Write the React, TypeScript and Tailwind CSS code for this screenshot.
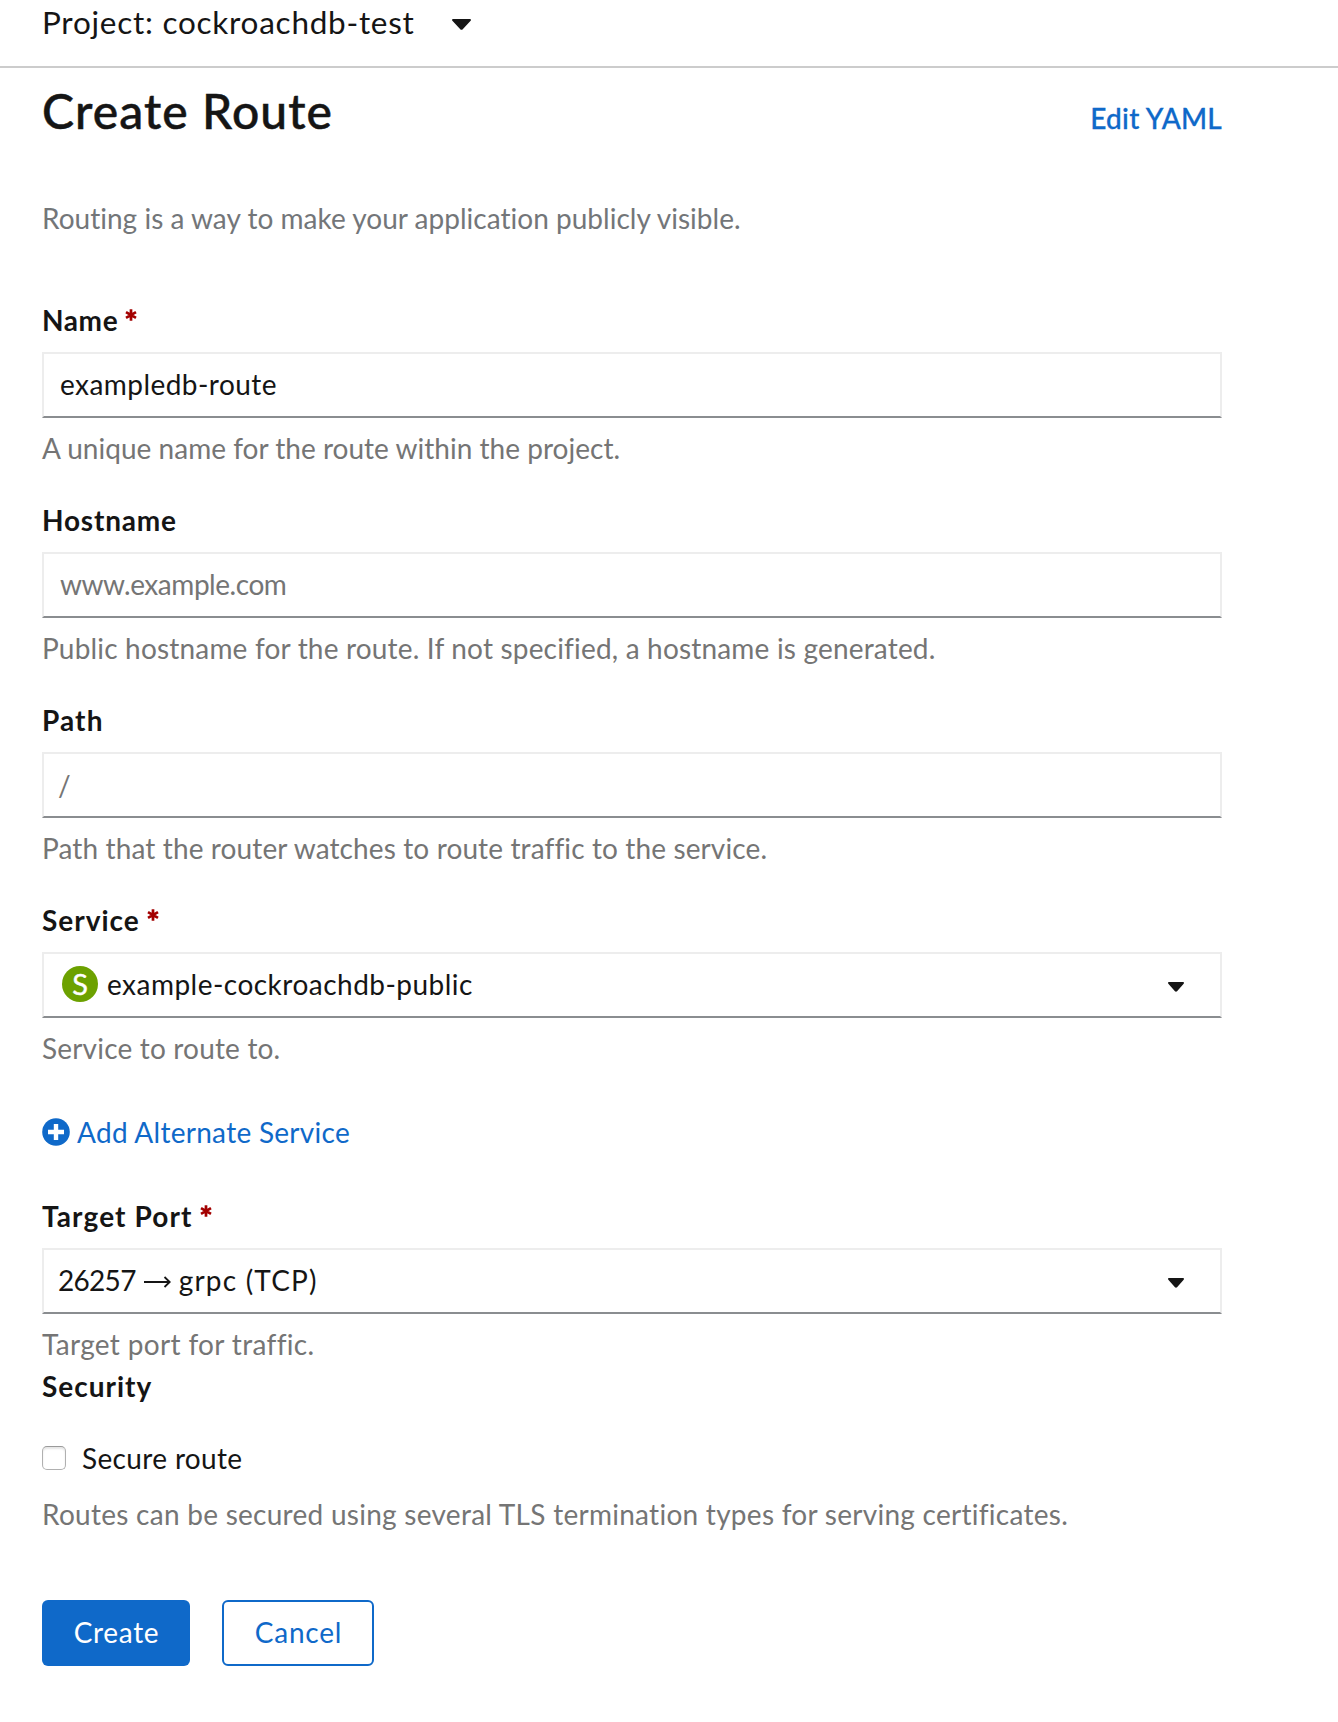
import type { ReactNode } from 'react';

function Caret({ className }: { className: string }) {
  return (
    <svg viewBox="0 0 20 11" preserveAspectRatio="none" className={className} fill="currentColor" aria-hidden="true">
      <path d="M1.2 0h17.6c1 0 1.5 1.1.8 1.8l-8.3 8.5c-.7.7-1.9.7-2.6 0L.4 1.8C-.3 1.1.2 0 1.2 0z" />
    </svg>
  );
}

function Label({ children, tracking, required }: { children: ReactNode; tracking: string; required?: boolean }) {
  return (
    <div className="flex h-[42px] items-start text-[28px] leading-[44px] font-bold">
      <span className={tracking}>{children}</span>
      {required && (
        <svg viewBox="0 0 12 12" className="mt-[11px] ml-[7px] h-[12px] w-[12px] text-[#a30000]" aria-label="required">
          <path d="M6 .3v11.4M1 3.1l10 5.8M11 3.1L1 8.9" stroke="currentColor" strokeWidth="2.7" fill="none" />
        </svg>
      )}
    </div>
  );
}

const box =
  'mt-3 flex h-[66px] w-full items-center border-2 border-t-[#ededed] border-r-[#ededed] border-b-[#8a8d90] border-l-[#ededed] bg-white pb-[2px] text-[28px]';

function Helper({ children, tracking }: { children: ReactNode; tracking: string }) {
  return (
    <p className="mt-2 h-[42px] text-[28px] leading-[44px] whitespace-nowrap text-[#757575]">
      <span className={tracking}>{children}</span>
    </p>
  );
}

export default function App() {
  return (
    <div className="min-h-[1722px] w-full overflow-hidden bg-white font-['Lato','Liberation_Sans',sans-serif] text-[#151515] [font-variant-ligatures:none]">
      <header className="flex h-[68px] items-start border-b-2 border-[#cccccc] pl-[42px]">
        <button className="flex h-[46px] items-center text-[31.5px] leading-[46px] whitespace-nowrap">
          <span className="mb-[2px] w-[373px] text-left tracking-[0.74px]">Project: cockroachdb-test</span>
          <Caret className="mt-[3px] ml-[37px] h-[11px] w-[19px]" />
        </button>
      </header>

      <main className="w-[1222px] pl-[42px]">
        <div className="flex h-[106px] items-start justify-between pt-[11px]">
          <h1 className="text-[48px] leading-[64px] font-medium tracking-[1.1px] whitespace-nowrap [-webkit-text-stroke:0.5px_currentColor]">
            Create Route
          </h1>
          <a className="mt-[17px] text-[28px] leading-[44px] font-medium tracking-[0.25px] whitespace-nowrap text-[#0f69c9] [-webkit-text-stroke:0.3px_currentColor]">
            Edit YAML
          </a>
        </div>

        <p className="mt-[22px] h-[42px] text-[28px] leading-[44px] tracking-[0.02px] whitespace-nowrap text-[#737679]">
          Routing is a way to make your application publicly visible.
        </p>

        <form className="mt-[60px]" onSubmit={(e) => e.preventDefault()}>
          <section>
            <Label tracking="tracking-[0.6px]" required>Name</Label>
            <input className={`${box} pl-4 tracking-[0.45px] outline-none`} defaultValue="exampledb-route" />
            <Helper tracking="tracking-[0.02px]">A unique name for the route within the project.</Helper>
          </section>

          <section className="mt-[30px]">
            <Label tracking="tracking-[0.8px]">Hostname</Label>
            <input
              className={`${box} pl-4 tracking-[-0.45px] outline-none placeholder:text-[#757575]`}
              placeholder="www.example.com"
            />
            <Helper tracking="tracking-[0.18px]">
              Public hostname for the route. If not specified, a hostname is generated.
            </Helper>
          </section>

          <section className="mt-[30px]">
            <Label tracking="tracking-[1.1px]">Path</Label>
            <input className={`${box} pt-[2px] pb-0 pl-[14px] outline-none placeholder:text-[#757575]`} placeholder="/" />
            <Helper tracking="tracking-[0.12px]">Path that the router watches to route traffic to the service.</Helper>
          </section>

          <section className="mt-[30px]">
            <Label tracking="tracking-[1px]" required>Service</Label>
            <button className={`${box} justify-between pr-[36px] pl-[18px]`}>
              <span className="flex items-center gap-[9px]">
                <span className="flex h-9 w-9 items-center justify-center rounded-full bg-[#6ca100] pb-[2px] text-[29px] leading-none text-white [-webkit-text-stroke:0.4px_currentColor]">
                  S
                </span>
                <span className="tracking-[0.48px]">example-cockroachdb-public</span>
              </span>
              <Caret className="mt-[6px] h-[10px] w-4" />
            </button>
            <Helper tracking="tracking-[0.18px]">Service to route to.</Helper>
          </section>

          <button className="mt-[42px] flex h-[42px] items-start text-[28px] leading-[44px] text-[#0f69c9]">
            <svg viewBox="0 0 28 28" className="mt-2 mr-[7px] h-7 w-7" aria-hidden="true">
              <circle cx="14" cy="14" r="13.8" fill="currentColor" />
              <path d="M14 6v16M6 14h16" stroke="#fff" strokeWidth="4.4" />
            </svg>
            <span className="tracking-[0.28px] whitespace-nowrap">Add Alternate Service</span>
          </button>

          <section className="mt-[42px]">
            <Label tracking="tracking-[1.1px]" required>Target Port</Label>
            <button className={`${box} justify-between pr-[36px] pl-[14px]`}>
              <span className="flex items-center whitespace-nowrap">
                <span className="tracking-[-0.7px]">26257</span>
                <svg viewBox="0 0 27 12" className="mt-1 mr-[8px] ml-[8px] h-3 w-[27px]" fill="none" aria-label="to">
                  <path d="M0 6h25.5M20.5 1l5.2 5-5.2 5" stroke="currentColor" strokeWidth="1.8" />
                </svg>
                <span className="tracking-[1.2px]">grpc (TCP)</span>
              </span>
              <Caret className="mt-[6px] h-[10px] w-4" />
            </button>
            <Helper tracking="tracking-[0.34px]">Target port for traffic.</Helper>
          </section>

          <section>
            <Label tracking="tracking-[1px]">Security</Label>
            <label className="mt-[30px] flex h-[42px] items-start text-[28px] leading-[44px]">
              <input
                type="checkbox"
                className="mt-[10px] mr-[16px] h-6 w-6 appearance-none rounded-[5px] border border-[#b0b0b0] border-t-[#9a9a9a] bg-white shadow-[inset_0_2px_2px_rgba(0,0,0,0.1)]"
              />
              <span className="tracking-[0.35px]">Secure route</span>
            </label>
            <p className="mt-[14px] h-[42px] text-[28px] leading-[44px] tracking-[0.27px] whitespace-nowrap text-[#757575]">
              Routes can be secured using several TLS termination types for serving certificates.
            </p>
          </section>

          <div className="mt-[66px] flex gap-8 text-[28px]">
            <button className="h-[66px] w-[148px] rounded-[6px] bg-[#0f69c9] pb-[2px] pl-px tracking-[0.66px] text-white">
              Create
            </button>
            <button className="h-[66px] w-[152px] rounded-[6px] border-2 border-[#0f69c9] pb-[2px] pl-px tracking-[0.77px] text-[#0f69c9]">
              Cancel
            </button>
          </div>
        </form>
      </main>
    </div>
  );
}
